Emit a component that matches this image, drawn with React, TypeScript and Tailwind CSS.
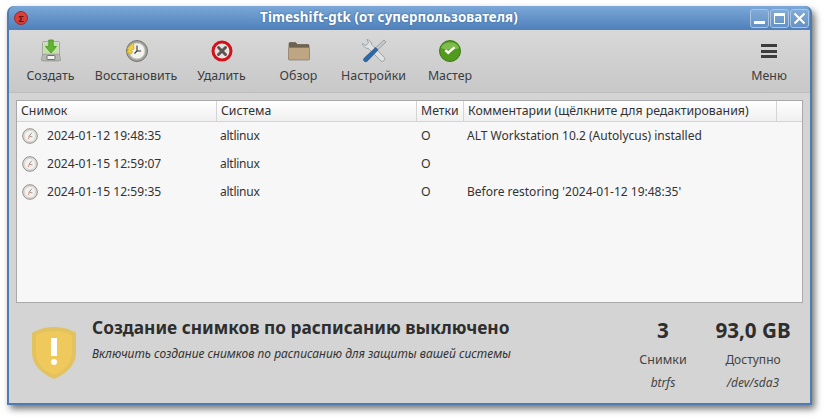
const font = { fontFamily: '"Noto Sans", "Open Sans", sans-serif' };

function CreateIcon() {
  return (
    <svg width="24" height="24" viewBox="0 0 24 24">
      <path d="M4 2.500h16l.5 1V21a1 1 0 0 1-1 1h-15a1 1 0 0 1-1-1V3.500z" fill="#d9dcd6" stroke="#a4a8a0" />
      <rect x="4.500" y="4" width="15" height="10" fill="#c3e0a6" />
      <path d="M2.500 19 4 15h16l1.500 4v2.500h-19z" fill="#b5b8b2" stroke="#8e918c" strokeWidth=".6" />
      <rect x="8" y="16.500" width="8" height="4" rx=".6" fill="#f1f1ef" stroke="#6f716d" />
      <path d="M9.800 1h4.400v6.500h3.300L12 14 6.500 7.500h3.300z" fill="#62b531" stroke="#3d8a1c" strokeWidth=".7" />
    </svg>
  );
}

function RestoreIcon() {
  return (
    <svg width="24" height="24" viewBox="0 0 24 24">
      <circle cx="13" cy="12" r="10.500" fill="#a3a39c" stroke="#77776f" />
      <circle cx="13" cy="12" r="8" fill="#f2f2ee" stroke="#c8c8c2" />
      <path d="M13 6.500V12l-2.500 2.500M13 12h4" fill="none" stroke="#333" strokeWidth="1.100" />
      <path d="M9.500 3.500 3 9.500l1.500 1-1.800 3 4.800 1.500 1-2.500-1.500-1 3-1.500z" fill="#eecf45" stroke="#c8a31e" strokeWidth=".7" />
    </svg>
  );
}

function DeleteIcon() {
  return (
    <svg width="24" height="24" viewBox="0 0 24 24">
      <circle cx="12" cy="12" r="9" fill="#e7e3e0" stroke="#d4101a" strokeWidth="3" />
      <path d="m8.500 8.500 7 7M15.500 8.500l-7 7" stroke="#5f5452" strokeWidth="3" strokeLinecap="round" />
    </svg>
  );
}

function FolderIcon() {
  return (
    <svg width="24" height="24" viewBox="0 0 24 24">
      <path d="M2 4.500a1 1 0 0 1 1-1h5.500l2 2H21a1 1 0 0 1 1 1V9H2z" fill="#6f6350" stroke="#5c5242" strokeWidth=".6" />
      <path d="M1.500 9.500a1 1 0 0 1 1-1h19a1 1 0 0 1 1 1V20a1 1 0 0 1-1 1h-19a1 1 0 0 1-1-1z" fill="#bda681" stroke="#85765e" strokeWidth=".7" />
    </svg>
  );
}

function SettingsIcon() {
  return (
    <svg width="26" height="26" viewBox="0 0 26 26">
      <path d="M6 1.500c2.500.5 4.500 2.500 4.500 5l1 1L23.500 19.500c1 2.500-1 4.500-3.500 3.500L8.500 11.500 7 10.500c-2.500 0-5-2-5.500-5L4.800 7.500 7.500 5z" fill="#dfe2e3" stroke="#8f9598" strokeWidth=".8" />
      <path d="M23 2 25 4l-8 7.500-2-2z" fill="#c6cacc" stroke="#858b8e" strokeWidth=".7" />
      <path d="M14.500 9.500l2.500 2.500L7 22.500c-1.200 1.500-3.300 1.500-4 .5-.8-1-.5-2.200.5-3.200z" fill="#2d69a8" stroke="#224f7e" strokeWidth=".6" />
    </svg>
  );
}

function WizardIcon() {
  return (
    <svg width="24" height="24" viewBox="0 0 24 24">
      <circle cx="12" cy="12" r="10.500" fill="#519a1d" stroke="#3d7c15" />
      <path d="M3 9a9.500 8 0 0 1 18 0c-4 2-14 2-18 0z" fill="#8cc45a" opacity=".8" />
      <path d="m6.500 12 3.800 3.500 7-6.500-1.500-1.500-5.500 4.500-2.200-1.800z" fill="#fff" />
    </svg>
  );
}

function ClockIcon() {
  return (
    <svg width="16" height="16" viewBox="0 0 16 16">
      <circle cx="8" cy="8" r="7.300" fill="#e2e1de" stroke="#8f8d88" />
      <circle cx="8" cy="8" r="5.600" fill="#f3f2f0" stroke="#cfcdc9" strokeWidth=".6" />
      <path d="M9.800 4.800 7.200 8l3.300 1" fill="none" stroke="#8a8580" strokeWidth=".8" />
      <path d="M7.200 8 6.500 11" stroke="#d9705a" strokeWidth=".8" />
    </svg>
  );
}

function ShieldIcon() {
  return (
    <svg width="44" height="52" viewBox="0 0 44 52">
      <path d="M22 0c8 0 16 2 22 6v20c0 12-10 21-22 26C10 47 0 38 0 26V6C6 2 14 0 22 0z" fill="#e3c35f" />
      <path d="M22 4c7 0 13 1.500 18 4.500V26c0 10-8 18-18 22C12 44 4 36 4 26V8.500C9 5.500 15 4 22 4z" fill="#efc95c" />
      <rect x="19" y="11" width="6" height="18" fill="#fff" />
      <circle cx="22" cy="35" r="3" fill="#fff" />
    </svg>
  );
}

function WindowLogo() {
  return (
    <div className="w-[14px] h-[14px] rounded-full bg-[#d9403a] border border-[#9c2b28] flex items-center justify-center text-[9px] leading-none font-bold text-[#5d1512]">
      Σ
    </div>
  );
}

const tools = [
  { label: "Создать", icon: <CreateIcon />, w: "w-[69px]" },
  { label: "Восстановить", icon: <RestoreIcon />, w: "w-[102px]" },
  { label: "Удалить", icon: <DeleteIcon />, w: "w-[69px]" },
  { label: "Обзор", icon: <FolderIcon />, w: "w-[85px]" },
  { label: "Настройки", icon: <SettingsIcon />, w: "w-[65px]" },
  { label: "Мастер", icon: <WizardIcon />, w: "w-[88px]" },
];

const rows = [
  { date: "2024-01-12 19:48:35", sys: "altlinux", tag: "O", comment: "ALT Workstation 10.2 (Autolycus) installed" },
  { date: "2024-01-15 12:59:07", sys: "altlinux", tag: "O", comment: "" },
  { date: "2024-01-15 12:59:35", sys: "altlinux", tag: "O", comment: "Before restoring '2024-01-12 19:48:35'" },
];

export default function App() {
  return (
    <div className="w-[826px] h-[420px] bg-white overflow-hidden pt-[6px] pl-[7px]" style={font}>
      <div className="w-[805px] h-[399px] flex flex-col rounded-t-[7px] bg-[#4c7cb4] p-[2px] pt-0 shadow-[3px_4px_7px_rgba(0,0,0,0.55)]">
        {/* Titlebar */}
        <div className="h-[24px] shrink-0 flex items-center justify-between bg-gradient-to-b from-[#7ba8d8] to-[#4e80ba] rounded-t-[6px] pl-[5px] pr-[1px]">
          <WindowLogo />
          <div className="flex-1 text-center text-white font-bold text-[13.300px] leading-none tracking-[0.1px] [text-shadow:0_0_2px_#2f5a8c]">
            Timeshift-gtk (от суперпользователя)
          </div>
          <div className="flex gap-[1px]">
            <div className="w-[19px] h-[19px] rounded-[3px] border border-[#a8c5e4] bg-white/10 flex items-end justify-center pb-[3px]">
              <div className="w-[11px] h-[3px] bg-white" />
            </div>
            <div className="w-[19px] h-[19px] rounded-[3px] border border-[#a8c5e4] bg-white/10 flex items-center justify-center">
              <div className="w-[11px] h-[11px] border border-white border-t-[3px]" />
            </div>
            <div className="w-[19px] h-[19px] rounded-[3px] border border-[#a8c5e4] bg-white/10 flex items-center justify-center">
              <svg width="13" height="13" viewBox="0 0 13 13">
                <path d="m1.500 1.500 10 10M11.500 1.500l-10 10" stroke="#fff" strokeWidth="2" />
              </svg>
            </div>
          </div>
        </div>
        <div className="flex-1 flex flex-col bg-[#d4d4d4] min-h-0">
          {/* Toolbar */}
          <div className="h-[63px] shrink-0 flex items-start justify-between pt-[9px] pl-[7px] pr-[15px] bg-gradient-to-b from-[#d8d8d8] to-[#c8c8c8] border-b border-[#bdbdbd]">
            <div className="flex">
              {tools.map((t) => (
                <div key={t.label} className={`${t.w} shrink-0 flex flex-col items-center`}>
                  <div className="h-[24px] flex items-center justify-center">{t.icon}</div>
                  <div className="mt-[4px] text-[12.400px] leading-[18px] text-[#3c3c3c] whitespace-nowrap">{t.label}</div>
                </div>
              ))}
            </div>
            <div className="w-[52px] flex flex-col items-center">
              <div className="h-[24px] flex flex-col gap-[2.500px] justify-center">
                <div className="w-[16px] h-[3px] bg-[#3c3c3c]" />
                <div className="w-[16px] h-[3px] bg-[#3c3c3c]" />
                <div className="w-[16px] h-[3px] bg-[#3c3c3c]" />
              </div>
              <div className="mt-[4px] text-[12.400px] leading-[18px] text-[#3c3c3c]">Меню</div>
            </div>
          </div>
          {/* Snapshot table */}
          <div className="mx-[7px] mt-[7px] h-[203px] shrink-0 bg-[#f7f7f7] border border-[#a9a9a9] flex flex-col text-[12.300px] text-[#333]">
            <div className="h-[21px] shrink-0 flex bg-gradient-to-b from-white to-[#f0f0f0] border-b border-[#d4d4d4] leading-[20px]">
              <div className="w-[200px] pl-[4px] border-r border-[#d4d4d4]">Снимок</div>
              <div className="w-[200px] pl-[4px] border-r border-[#d4d4d4]">Система</div>
              <div className="w-[47px] pl-[4px] border-r border-[#d4d4d4]">Метки</div>
              <div className="w-[313px] pl-[4px] border-r border-[#d4d4d4] whitespace-nowrap">Комментарии (щёлкните для редактирования)</div>
            </div>
            <div>
              {rows.map((r) => (
                <div key={r.date} className="h-[28px] flex items-center">
                  <div className="w-[200px] flex items-center pl-[5px] gap-[9px]">
                    <ClockIcon />
                    <span className="whitespace-nowrap text-[12.100px]">{r.date}</span>
                  </div>
                  <div className="w-[200px] pl-[3px] text-[12px] tracking-[-0.25px]">{r.sys}</div>
                  <div className="w-[47px] pl-[4px]">{r.tag}</div>
                  <div className="pl-[3px] whitespace-nowrap text-[12px]">{r.comment}</div>
                </div>
              ))}
            </div>
          </div>
          {/* Status */}
          <div className="flex-1 flex items-start pl-[23px] pr-[17px] pt-[13px] text-[#2e2e2e]">
            <div className="mt-[11px] shrink-0"><ShieldIcon /></div>
            <div className="ml-[16px] flex-1">
              <div className="text-[17.300px] font-bold leading-[24px] whitespace-nowrap">Создание снимков по расписанию выключено</div>
              <div className="mt-[6px] text-[12px] italic leading-[16px] whitespace-nowrap text-[#333]">Включить создание снимков по расписанию для защиты вашей системы</div>
            </div>
            <div className="w-[48px] pt-[2px] flex flex-col items-center">
              <div className="text-[20.600px] font-bold leading-[24px]">3</div>
              <div className="mt-[9px] text-[12.500px] leading-[18px] text-[#444]">Снимки</div>
              <div className="mt-[5px] text-[12px] italic leading-[18px] text-[#444]">btrfs</div>
            </div>
            <div className="w-[80px] ml-[26px] pt-[2px] flex flex-col items-center">
              <div className="text-[20.600px] font-bold leading-[24px] whitespace-nowrap">93,0 GB</div>
              <div className="mt-[9px] text-[12px] leading-[18px] text-[#444]">Доступно</div>
              <div className="mt-[5px] text-[12px] italic leading-[18px] text-[#444]">/dev/sda3</div>
            </div>
          </div>
        </div>
      </div>
    </div>
  );
}
